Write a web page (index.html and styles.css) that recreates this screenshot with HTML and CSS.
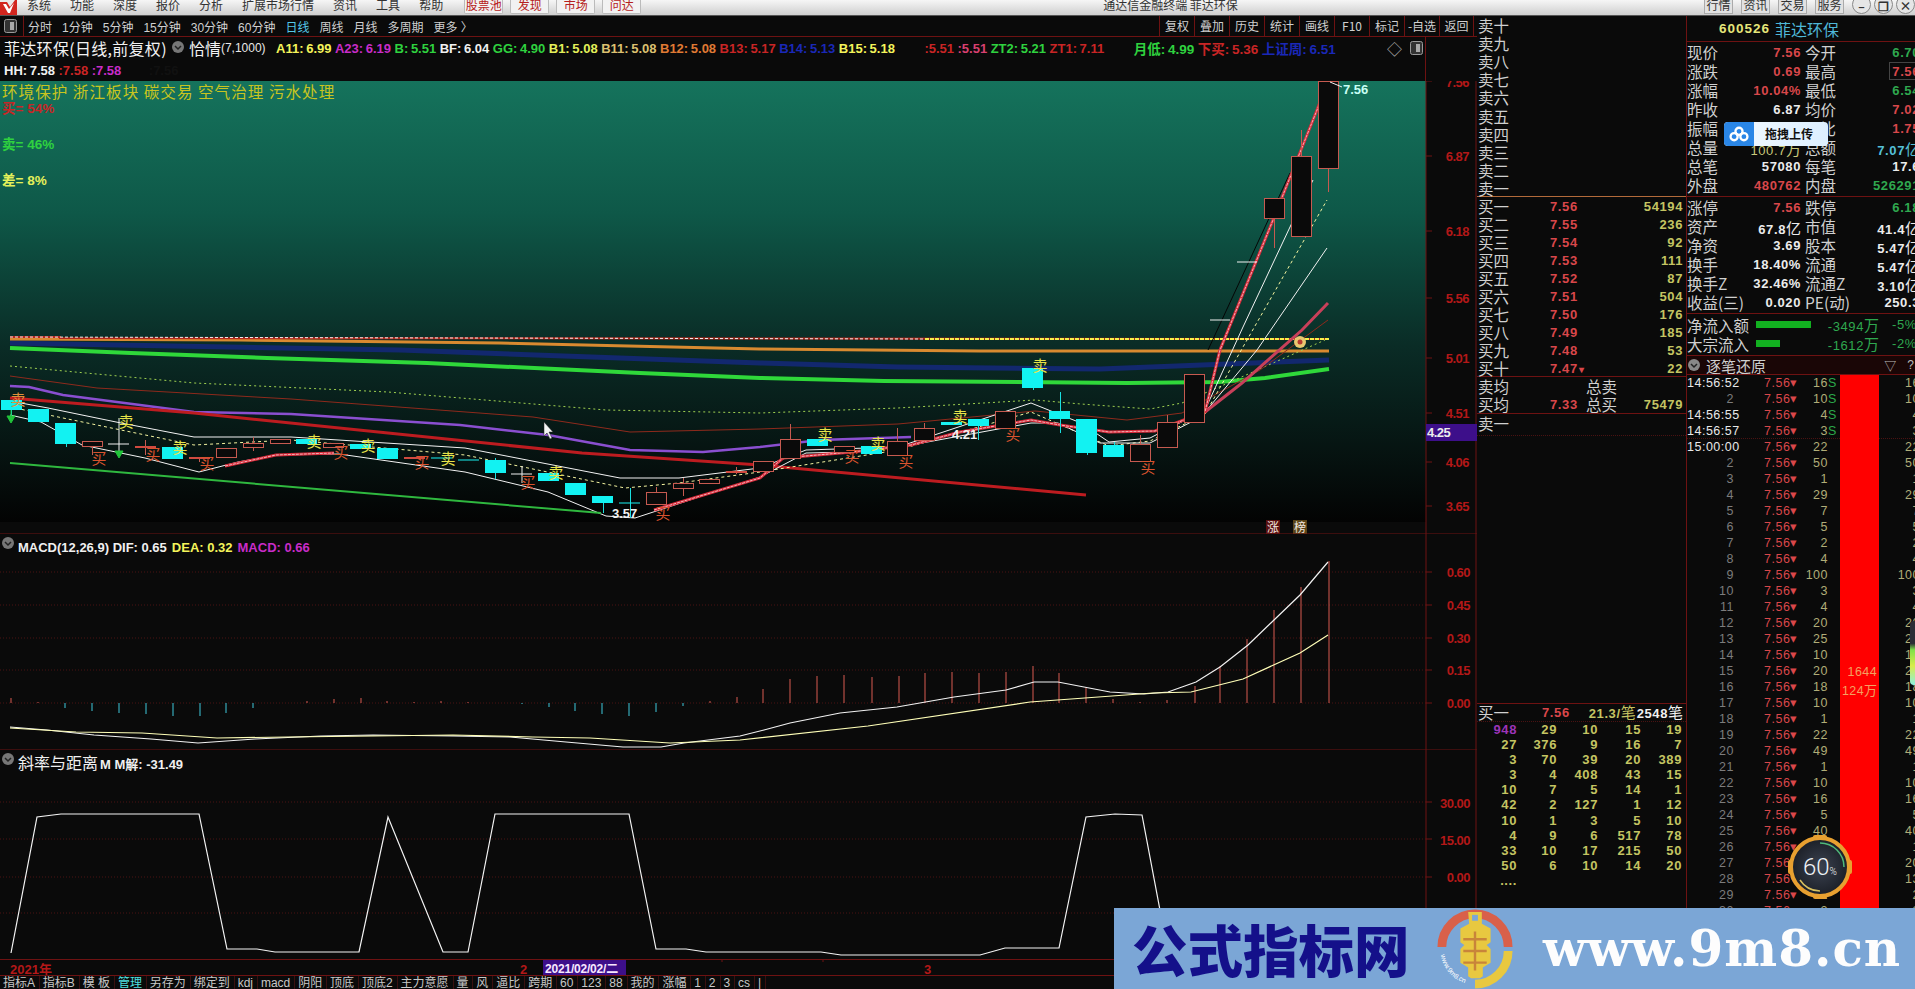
FILE: index.html
```html
<!DOCTYPE html>
<html lang="zh-CN">
<head>
    <meta charset="UTF-8">
    <title>通达信金融终端 菲达环保</title>
    <link rel="stylesheet" href="styles.css">
</head>
<body>
    <header class="titlebar">
        <svg class="logo" viewBox="0 0 17 15"><rect width="17" height="15" fill="#e8e8e8"/><path d="M0 2h7l3 5 5-7h2v15H0z" fill="#d2261f"/><path d="M3 4h3l3 5 5-6-4 10H8z" fill="#fff"/></svg>
        <nav class="menu">
            <span>系统</span><span>功能</span><span>深度</span><span>报价</span><span>分析</span><span>扩展市场行情</span><span>资讯</span><span>工具</span><span>帮助</span>
        </nav>
        <div class="quick">
            <span>股票池</span><span>发现</span><span>市场</span><span>问达</span>
        </div>
        <div class="app-title">通达信金融终端 菲达环保</div>
        <div class="win">
            <span class="win-btn">行情</span><span class="win-btn">资讯</span><span class="win-btn">交易</span><span class="win-btn">服务</span>
            <span class="win-dot">–</span><span class="win-dot">❐</span><span class="win-dot">×</span>
        </div>
    </header>

    <main class="main">
        <section class="left">
            <div class="toolbar">
                <svg class="toggle" viewBox="0 0 13 14"><rect x=".5" y=".5" width="12" height="13" rx="2" fill="#333" stroke="#999"/><rect x="6" y="3" width="4" height="8" fill="#aaa"/></svg>
                <div class="periods">
                    <span>分时</span><span>1分钟</span><span>5分钟</span><span>15分钟</span><span>30分钟</span><span>60分钟</span><span class="on">日线</span><span>周线</span><span>月线</span><span>多周期</span><span>更多 〉</span>
                </div>
                <div class="tools">
                    <span>复权</span><span>叠加</span><span>历史</span><span>统计</span><span>画线</span><span>F10</span><span>标记</span><span>-自选</span><span>返回</span>
                </div>
            </div>

            <div class="legend">
                <div class="lg-row">
                    <span class="stock">菲达环保(日线,前复权)</span>
                    <svg class="chev" viewBox="0 0 12 12"><circle cx="6" cy="6" r="6" fill="#777"/><path d="M3 5l3 3 3-3" fill="none" stroke="#222" stroke-width="1.5"/></svg>
                    <span class="stock f-name">恰情</span><span class="params">(7,1000)</span>
                    <span class="n c-yellow g-first">A11: 6.99</span>
                    <span class="n c-magenta">A23: 6.19</span>
                    <span class="n c-green">B: 5.51</span>
                    <span class="n c-white">BF: 6.04</span>
                    <span class="n c-green">GG: 4.90</span>
                    <span class="n c-lime">B1: 5.08</span>
                    <span class="n c-tan">B11: 5.08</span>
                    <span class="n c-orange">B12: 5.08</span>
                    <span class="n c-red">B13: 5.17</span>
                    <span class="n c-blue">B14: 5.13</span>
                    <span class="n c-yellow">B15: 5.18</span>
                    <span class="n c-red g-wide">:5.51</span>
                    <span class="n c-pink">:5.51</span>
                    <span class="n c-green">ZT2: 5.21</span>
                    <span class="n c-red">ZT1: 7.11</span>
                    <span class="n c-green g-wide cjk">月低: 4.99</span>
                    <span class="n c-red cjk">下买: 5.36</span>
                    <span class="n c-blue cjk">上证周: 6.51</span>
                    <span class="lg-end">
                        <span class="diamond">◇</span>
                        <svg class="toggle small" viewBox="0 0 13 14"><rect x=".5" y=".5" width="12" height="13" rx="2" fill="#333" stroke="#999"/><rect x="6" y="3" width="4" height="8" fill="#aaa"/></svg>
                    </span>
                </div>
                <div class="lg-row">
                    <span class="n c-white">HH: 7.58</span>
                    <span class="n c-red">:7.58</span>
                    <span class="n c-magenta">:7.58</span>
                    <span class="n c-hidden">:7.56</span>
                </div>
            </div>

            <svg class="pane" width="1477" height="453" viewBox="0 81 1477 453">
                <defs>
                    <linearGradient id="sky" x1="0" y1="0" x2="0" y2="1">
                        <stop offset="0" stop-color="#15735c"/>
                        <stop offset=".3" stop-color="#0e5848"/>
                        <stop offset=".6" stop-color="#0a2c26"/>
                        <stop offset="1" stop-color="#030303"/>
                    </linearGradient>
                </defs>
                <rect x="0" y="81" width="1426" height="441" fill="url(#sky)"/>

                <!-- trend lines -->
                <polyline class="l-navy" points="10,343 400,350 760,363 898,367 1100,369 1329,360"/>
                <polyline class="l-orange" points="10,339 240,340 500,343 760,349 980,351 1329,351"/>
                <polyline class="l-redtop" points="10,337 60,337 60,338 1329,339"/>
                <polyline class="l-whitedash" points="10,337 925,339"/>
                <polyline class="l-yellowdash" points="925,339 1329,339"/>
                <polyline class="l-green" points="10,348 131,353 267,358 427,363 640,373 760,378 884,381 1127,383 1219,382 1265,378 1329,369"/>
                <polyline class="l-dotgreen" points="10,366 194,383 388,392 606,410 760,413 898,408 1035,400 1081,404 1150,409 1182,403 1219,387 1325,340"/>
                <polyline class="l-brown" points="10,376 97,388 291,399 533,417 630,432 760,429 898,424 1035,411 1127,420 1182,413 1260,370 1328,320"/>
                <polyline class="l-purple" points="10,386 29,387 63,395 194,412 291,414 460,425 548,435 630,450 703,452 760,447 820,440 911,437"/>
                <polyline class="l-red" points="10,398 194,413 388,433 582,453 760,465 1086,495"/>
                <polyline class="l-white" points="10,401 48,408 121,423 194,437 291,437 465,448 620,478 679,478 760,468 806,450 898,447 1031,403 1081,423 1109,442 1150,438 1205,410 1243,327 1290,227 1313,180"/>
                <polyline class="l-dotwhite" points="10,407 121,430 194,445 291,440 465,455 625,488 679,483 760,472 898,450 1031,412 1109,446 1150,441 1205,414 1243,347 1327,200"/>
                <polyline class="l-white" points="10,415 41,422 82,445 145,458 199,472 238,462 276,455 339,454 465,472 548,492 606,516 635,518 760,477 806,453 852,452 911,445 1031,423 1058,423 1100,443 1150,443 1201,417 1257,350 1327,248"/>
                <polyline class="l-black" points="1208,350 1290,173"/>
                <polyline class="l-lowgreen" points="10,463 601,513"/>
                <polyline class="l-pink" points="1205,412 1242,383 1302,330 1328,303"/>
                <polyline class="l-fat" points="225,466 276,455 334,453"/>
                <polyline class="l-fat" points="654,510 760,478 783,458 852,452 911,445 960,432 1031,420 1060,425 1109,432 1155,431 1205,412 1220,350 1273,220 1317,110 1328,81"/>
                <polyline class="l-fatcore" points="225,466 276,455 334,453"/>
                <polyline class="l-fatcore" points="654,510 760,478 783,458 852,452 911,445 960,432 1031,420 1060,425 1109,432 1155,431 1205,412 1220,350 1273,220 1317,110 1328,81"/>

                <!-- candles -->
                <g class="wicks-up">
                    <path d="M92.5 446V455M145.5 440V455M199.5 458V462M253.5 437V451M656.5 487V492M683.5 478V496M736.5 467V474M790.5 424V439M897.5 428V441M924.5 423V428M1140.5 435V444M1167.5 415V422M1274.5 218V248M1301.5 130V156M1328.5 168V192"/>
                </g>
                <g class="wicks-dn">
                    <path d="M11.5 410V416M66.5 444V447M495.5 458V479M603.5 503V513M630.5 488V518M978.5 426V440M1033.5 388V390M1060.5 392V433M1087.5 453V455M1114.5 442V457"/>
                </g>
                <g class="flat-up">
                    <path d="M135 447H156M189 458H210M404 458H425M726 472H747"/>
                </g>
                <g class="flat-wh">
                    <path d="M108 444H129M511 474H532M1210 320H1230M1237 262H1257M522 466V483"/>
                </g>
                <g class="flat-dn">
                    <path d="M431 458H452M458 460H479M619 503H640"/>
                    <rect x="941" y="422" width="21" height="3"/>
                </g>
                <g class="k-dn">
                    <rect x="1" y="400" width="21" height="10"/><rect x="28" y="409" width="21" height="13"/><rect x="55" y="423" width="21" height="21"/>
                    <rect x="162" y="447" width="21" height="12"/><rect x="296" y="439" width="21" height="5"/><rect x="350" y="444" width="21" height="5"/>
                    <rect x="377" y="448" width="21" height="11"/><rect x="485" y="460" width="21" height="13"/><rect x="538" y="473" width="21" height="8"/>
                    <rect x="565" y="483" width="21" height="12"/><rect x="592" y="496" width="21" height="7"/><rect x="807" y="439" width="21" height="7"/>
                    <rect x="861" y="446" width="21" height="8"/><rect x="968" y="419" width="21" height="7"/><rect x="1022" y="368" width="21" height="20"/>
                    <rect x="1049" y="411" width="21" height="8"/><rect x="1076" y="419" width="21" height="34"/><rect x="1103" y="445" width="21" height="12"/>
                </g>
                <g class="k-up">
                    <rect x="82.5" y="441.5" width="20" height="5"/><rect x="216.5" y="448.5" width="20" height="9"/><rect x="243.5" y="443.5" width="20" height="4"/>
                    <rect x="270.5" y="439.5" width="20" height="4"/><rect x="323.5" y="443.5" width="20" height="4"/><rect x="646.5" y="492.5" width="20" height="12"/>
                    <rect x="673.5" y="483.5" width="20" height="5"/><rect x="699.5" y="479.5" width="20" height="4"/><rect x="753.5" y="461.5" width="20" height="10"/>
                    <rect x="780.5" y="439.5" width="20" height="19"/><rect x="834.5" y="446.5" width="20" height="6"/><rect x="887.5" y="441.5" width="20" height="14"/>
                    <rect x="914.5" y="428.5" width="20" height="12"/><rect x="995.5" y="411.5" width="20" height="17"/><rect x="1130.5" y="444.5" width="20" height="17"/>
                    <rect x="1157.5" y="422.5" width="20" height="25"/><rect x="1184.5" y="374.5" width="20" height="48"/><rect x="1264.5" y="198.5" width="20" height="20"/>
                    <rect x="1291.5" y="156.5" width="20" height="80"/><rect x="1318.5" y="81.5" width="20" height="87"/>
                </g>

                <!-- arrows, signals, marks -->
                <path class="a-green" d="M11 410V420M7 416l4 7 4-7z"/>
                <path class="a-white" d="M119 418V452"/>
                <path class="a-green" d="M115 451l4 7 4-7z"/>
                <g class="buy">
                    <text x="99" y="464">买</text><text x="153" y="460">买</text><text x="207" y="469">买</text><text x="341" y="458">买</text>
                    <text x="422" y="468">买</text><text x="528" y="488">买</text><text x="663" y="519">买</text><text x="852" y="462">买</text>
                    <text x="906" y="467">买</text><text x="1013" y="440">买</text><text x="1148" y="473">买</text>
                </g>
                <g class="sell">
                    <text class="orange" x="18" y="405">卖</text><text x="126" y="427">卖</text><text x="180" y="453">卖</text><text x="314" y="447">卖</text>
                    <text x="368" y="451">卖</text><text x="448" y="464">卖</text><text x="556" y="478">卖</text><text x="825" y="440">卖</text>
                    <text x="878" y="449">卖</text><text x="960" y="422">卖</text><text x="1040" y="371">卖</text>
                </g>
                <text class="mark" x="612" y="518">3.57</text>
                <text class="mark" x="952" y="439">4.21</text>
                <text class="mark cyan" x="1343" y="94">7.56</text>
                <path class="a-white" d="M1330 82l12 5"/>
                <path class="cursor" d="M544 422v14l3-3 3 6 2-1-3-6h4z"/>
                <circle cx="1300" cy="342" r="6" fill="#e8c870"/><circle cx="1300" cy="342" r="2.5" fill="#b83a30"/>
                <rect x="1266" y="520" width="14" height="14" fill="#5a1010"/><text class="tag" x="1273" y="532">涨</text>
                <rect x="1293" y="520" width="14" height="14" fill="#5a4418"/><text class="tag" x="1300" y="532">榜</text>
                <path class="ticks-top" d="M11 79v2M91 79v2M603 79v2M1005 79v2M1220 79v2M1247 79v2M1301 79v2M1328 78v3"/>
                <text class="chart-tag" x="2" y="98">环境保护 浙江板块 碳交易 空气治理 污水处理</text>
                <text class="ratio c-red" x="2" y="113">买= 54%</text>
                <text class="ratio c-green" x="2" y="149">卖= 46%</text>
                <text class="ratio c-lime" x="2" y="185">差= 8%</text>

                <!-- price axis -->
                <path class="axis-line" d="M1426 81V534M1476 81V534M0 534H1477"/>
                <path class="axis-line" d="M1426 81h6M1426 156h6M1426 231h6M1426 298h6M1426 358h6M1426 413h6M1426 462h6M1426 506h6"/>
                <g class="axis-text">
                    <text x="1469" y="87">7.56</text><text x="1469" y="161">6.87</text><text x="1469" y="236">6.18</text><text x="1469" y="303">5.56</text>
                    <text x="1469" y="363">5.01</text><text x="1469" y="418">4.51</text><text x="1469" y="467">4.06</text><text x="1469" y="511">3.65</text>
                </g>
                <rect x="1426" y="424" width="51" height="17" fill="#3d0f8a"/>
                <text class="axis-now" x="1427" y="437">4.25</text>
            </svg>

            <svg class="pane" width="1477" height="216" viewBox="0 534 1477 216">
                <path class="grid" d="M0 572H1426M0 605H1426M0 638H1426M0 670H1426M0 703H1426"/>
                <path class="bar-up" d="M11 698V703M38 702V703M307 701V703M334 699V703M361 698V703M387 701V703M414 702V703M441 701V703M468 702V703M710 701V703M737 697V703M763 689V703M790 679V703M817 676V703M844 675V703M872 677V703M899 676V703M925 673V703M952 672V703M979 673V703M1006 672V703M1033 666V703M1059 673V703M1086 687V703M1113 699V703M1140 702V703M1167 700V703M1195 686V703M1220 666V703M1247 639V703M1274 610V703M1301 587V703M1329 561V703"/>
                <path class="bar-dn" d="M65 703V708M92 703V711M119 703V713M146 703V714M173 703V716M200 703V716M226 703V713M253 703V708M522 703V704M549 703V707M575 703V711M602 703V714M629 703V716M656 703V712M683 703V706"/>
                <polyline class="dif" points="10,727 47,730 94,735 151,739 198,743 255,739 321,736 373,735 453,736 510,737 566,742 623,747 661,747 684,743 740,736 764,730 790,723 840,713 897,707 954,697 1006,690 1034,682 1058,682 1110,692 1144,694 1168,692 1196,682 1220,667 1248,645 1274,620 1300,595 1328,562"/>
                <polyline class="dea" points="10,728 76,732 142,733 217,738 288,737 373,736 453,735 533,737 590,738 670,743 740,740 868,726 1030,702 1153,693 1191,692 1243,679 1300,653 1328,635"/>
                <circle cx="8" cy="543" r="6" fill="#777"/><path d="M5 542l3 3 3-3" fill="none" stroke="#222" stroke-width="1.5"/>
                <text class="n-text" x="18" y="552"><tspan class="fill-white">MACD(12,26,9) DIF: 0.65</tspan><tspan class="fill-yellow" dx="5">DEA: 0.32</tspan><tspan class="fill-magenta" dx="5">MACD: 0.66</tspan></text>
                <path class="axis-line" d="M1426 534V750M1476 534V750M0 750H1477M1426 572h6M1426 605h6M1426 638h6M1426 670h6M1426 703h6"/>
                <g class="axis-text">
                    <text x="1470" y="577">0.60</text><text x="1470" y="610">0.45</text><text x="1470" y="643">0.30</text><text x="1470" y="675">0.15</text><text x="1470" y="708">0.00</text>
                </g>
            </svg>

            <svg class="pane" width="1477" height="209" viewBox="0 750 1477 209">
                <path class="grid" d="M0 802H1426M0 839H1426M0 877H1426M0 913H1426"/>
                <polyline class="slope" points="11,953 37,817 61,814 199,814 227,949 257,949 275,952 359,952 388,817 443,952 468,952 495,814 629,814 656,949 686,949 706,952 821,952 841,955 980,955 1005,948 1059,948 1086,817 1115,814 1142,815 1160,910 1168,940"/>
                <circle cx="8" cy="759" r="6" fill="#777"/><path d="M5 758l3 3 3-3" fill="none" stroke="#222" stroke-width="1.5"/>
                <text class="n-text fill-white" x="18" y="769"><tspan class="big-cjk">斜率与距离</tspan><tspan dx="2">M M解: -31.49</tspan></text>
                <path class="axis-line" d="M1426 750V959M1476 750V959M1426 802h6M1426 839h6M1426 877h6"/>
                <g class="axis-text">
                    <text x="1470" y="808">30.00</text><text x="1470" y="845">15.00</text><text x="1470" y="882">0.00</text>
                </g>
            </svg>

            <svg class="pane" width="1477" height="16" viewBox="0 959 1477 16">
                <path class="axis-line" d="M0 959.5H1477M1426 959V975M1476 959V975M722 959v3M823 959v3"/>
                <text class="date-red" x="10" y="974">2021年</text>
                <text class="date-red" x="520" y="974">2</text>
                <rect x="543" y="960" width="83" height="15" fill="#3d0f8a"/>
                <text class="date-now" x="545" y="973">2021/02/02/二</text>
                <text class="date-red" x="924" y="974">3</text>
            </svg>

            <div class="tabs">
                <span>指标A</span><span>指标B</span><span>模 板</span><span class="on">管理</span><span>另存为</span><span>绑定到</span><span>kdj</span><span>macd</span><span>阴阳</span><span>顶底</span><span>顶底2</span><span>主力意愿</span><span>量</span><span>风</span><span>逼比</span><span>跨期</span><span>60</span><span>123</span><span>88</span><span>我的</span><span>涨幅</span><span>1</span><span>2</span><span>3</span><span>cs</span><span>|</span>
            </div>
        </section>

        <section class="book">
            <div class="asks">
                <div class="ob">卖十</div><div class="ob">卖九</div><div class="ob">卖八</div><div class="ob">卖七</div><div class="ob">卖六</div>
                <div class="ob">卖五</div><div class="ob">卖四</div><div class="ob">卖三</div><div class="ob">卖二</div><div class="ob">卖一</div>
            </div>
            <div class="bids">
                <div class="ob">买一<b>7.56</b><i>54194</i></div>
                <div class="ob">买二<b>7.55</b><i>236</i></div>
                <div class="ob">买三<b>7.54</b><i>92</i></div>
                <div class="ob">买四<b>7.53</b><i>111</i></div>
                <div class="ob">买五<b>7.52</b><i>87</i></div>
                <div class="ob">买六<b>7.51</b><i>504</i></div>
                <div class="ob">买七<b>7.50</b><i>176</i></div>
                <div class="ob">买八<b>7.49</b><i>185</i></div>
                <div class="ob">买九<b>7.48</b><i>53</i></div>
                <div class="ob">买十<b>7.47<em>▾</em></b><i>22</i></div>
            </div>
            <div class="avg">
                <div class="ob">卖均<b></b><u>总卖</u></div>
                <div class="ob">买均<b>7.33</b><u>总买</u><i>75479</i></div>
            </div>
            <div class="queue-top">
                <div class="ob">卖一</div>
            </div>
            <div class="queue-gap"></div>
            <div class="queue">
                <div class="queue-head">
                    <span class="lbl">买一</span><b>7.56</b><i>21.3/<u>笔</u></i><em>2548<u>笔</u></em>
                </div>
                <div class="queue-grid">
                    <span class="p">948</span><span>29</span><span>10</span><span>15</span><span>19</span>
                    <span>27</span><span>376</span><span>9</span><span>16</span><span>7</span>
                    <span>3</span><span>70</span><span>39</span><span>20</span><span>389</span>
                    <span>3</span><span>4</span><span>408</span><span>43</span><span>15</span>
                    <span>10</span><span>7</span><span>5</span><span>14</span><span>1</span>
                    <span>42</span><span>2</span><span>127</span><span>1</span><span>12</span>
                    <span>10</span><span>1</span><span>3</span><span>5</span><span>10</span>
                    <span>4</span><span>9</span><span>6</span><span>517</span><span>78</span>
                    <span>33</span><span>10</span><span>17</span><span>215</span><span>50</span>
                    <span>50</span><span>6</span><span>10</span><span>14</span><span>20</span>
                    <span>....</span>
                </div>
            </div>
        </section>

        <section class="side">
            <div class="code-row"><b>600526</b><span>菲达环保</span></div>
            <div class="stats first">
                <span>现价</span><b class="up">7.56</b><span>今开</span><b class="down">6.70</b>
                <span>涨跌</span><b class="up">0.69</b><span>最高</span><b class="up boxed">7.56</b>
                <span>涨幅</span><b class="up">10.04%</b><span>最低</span><b class="down">6.54</b>
                <span>昨收</span><b>6.87</b><span>均价</span><b class="up">7.02</b>
                <span>振幅</span><b>15.64%</b><span>量比</span><b class="up">1.75</b>
                <span>总量</span><b class="pale">100.7<u>万</u></b><span>总额</span><b class="sky">7.07<u>亿</u></b>
                <span>总笔</span><b>57080</b><span>每笔</span><b>17.6</b>
                <span>外盘</span><b class="up">480762</b><span>内盘</span><b class="down">526291</b>
            </div>
            <div class="stats">
                <span>涨停</span><b class="up">7.56</b><span>跌停</span><b class="down">6.18</b>
                <span>资产</span><b>67.8<u>亿</u></b><span>市值</span><b>41.4<u>亿</u></b>
                <span>净资</span><b>3.69</b><span>股本</span><b>5.47<u>亿</u></b>
                <span>换手</span><b>18.40%</b><span>流通</span><b>5.47<u>亿</u></b>
                <span>换手Z</span><b>32.46%</b><span>流通Z</span><b>3.10<u>亿</u></b>
                <span>收益(三)</span><b>0.020</b><span>PE(动)</span><b>250.3</b>
            </div>
            <div class="flows">
                <div class="flow"><span>净流入额</span><div class="flow-bar"><i style="width:55px"></i></div><b>-3494<u>万</u></b><b class="pct">-5%</b></div>
                <div class="flow"><span>大宗流入</span><div class="flow-bar"><i style="width:24px"></i></div><b>-1612<u>万</u></b><b class="pct">-2%</b></div>
            </div>
            <div class="ticks-head">
                <svg class="chev" viewBox="0 0 12 12"><circle cx="6" cy="6" r="6" fill="#888"/><path d="M3 5l3 3 3-3" fill="none" stroke="#222" stroke-width="1.5"/></svg>
                <span>逐笔还原</span><em>▽</em><em>?</em>
            </div>
            <div class="ticks">
                <div class="tk-list">
                    <div class="tk"><span class="w">14:56:52</span><b>7.56▾</b><i>16</i><u>S</u></div>
                    <div class="tk"><span>2</span><b>7.56▾</b><i>10</i><u>S</u></div>
                    <div class="tk"><span class="w">14:56:55</span><b>7.56▾</b><i>4</i><u>S</u></div>
                    <div class="tk tk-last"><span class="w">14:56:57</span><b>7.56▾</b><i>3</i><u>S</u></div>
                    <div class="tk"><span class="w">15:00:00</span><b>7.56▾</b><i>22</i></div>
                    <div class="tk"><span>2</span><b>7.56▾</b><i>50</i></div>
                    <div class="tk"><span>3</span><b>7.56▾</b><i>1</i></div>
                    <div class="tk"><span>4</span><b>7.56▾</b><i>29</i></div>
                    <div class="tk"><span>5</span><b>7.56▾</b><i>7</i></div>
                    <div class="tk"><span>6</span><b>7.56▾</b><i>5</i></div>
                    <div class="tk"><span>7</span><b>7.56▾</b><i>2</i></div>
                    <div class="tk"><span>8</span><b>7.56▾</b><i>4</i></div>
                    <div class="tk"><span>9</span><b>7.56▾</b><i>100</i></div>
                    <div class="tk"><span>10</span><b>7.56▾</b><i>3</i></div>
                    <div class="tk"><span>11</span><b>7.56▾</b><i>4</i></div>
                    <div class="tk"><span>12</span><b>7.56▾</b><i>20</i></div>
                    <div class="tk"><span>13</span><b>7.56▾</b><i>25</i></div>
                    <div class="tk"><span>14</span><b>7.56▾</b><i>10</i></div>
                    <div class="tk"><span>15</span><b>7.56▾</b><i>20</i></div>
                    <div class="tk"><span>16</span><b>7.56▾</b><i>18</i></div>
                    <div class="tk"><span>17</span><b>7.56▾</b><i>10</i></div>
                    <div class="tk"><span>18</span><b>7.56▾</b><i>1</i></div>
                    <div class="tk"><span>19</span><b>7.56▾</b><i>22</i></div>
                    <div class="tk"><span>20</span><b>7.56▾</b><i>49</i></div>
                    <div class="tk"><span>21</span><b>7.56▾</b><i>1</i></div>
                    <div class="tk"><span>22</span><b>7.56▾</b><i>10</i></div>
                    <div class="tk"><span>23</span><b>7.56▾</b><i>16</i></div>
                    <div class="tk"><span>24</span><b>7.56▾</b><i>5</i></div>
                    <div class="tk"><span>25</span><b>7.56▾</b><i>40</i></div>
                    <div class="tk"><span>26</span><b>7.56▾</b><i>1</i></div>
                    <div class="tk"><span>27</span><b>7.56▾</b><i>20</i></div>
                    <div class="tk"><span>28</span><b>7.56▾</b><i>13</i></div>
                    <div class="tk"><span>29</span><b>7.56▾</b><i>2</i></div>
                    <div class="tk"><span>30</span><b>7.56▾</b><i>2</i></div>
                </div>
                <div class="tk-bar"><span>1644</span><span>124<u>万</u></span></div>
                <div class="tk-vols">
                    <span>16</span><span>10</span><span>4</span><span class="tk-last">3</span><span>22</span><span>50</span><span>1</span><span>29</span><span>7</span><span>5</span><span>2</span><span>4</span><span>100</span><span>3</span><span>4</span><span>20</span><span>25</span><span>10</span><span>20</span><span>18</span><span>10</span><span>1</span><span>22</span><span>49</span><span>1</span><span>10</span><span>16</span><span>5</span><span>40</span><span>1</span><span>20</span><span>13</span><span>2</span><span>2</span>
                </div>
            </div>
        </section>
    </main>

    <!-- things floating over the terminal -->
    <div class="upload">
        <div class="upload-icon">
            <svg viewBox="0 0 24 18" width="22" height="16"><g fill="none" stroke="#fff" stroke-width="2.6"><circle cx="12" cy="6" r="4"/><circle cx="6.5" cy="12" r="4"/><circle cx="17.5" cy="12" r="4"/></g></svg>
        </div>
        <span>拖拽上传</span>
    </div>

    <div class="badge">
        <svg viewBox="0 0 64 64" width="64" height="64">
            <defs><radialGradient id="dial"><stop offset="0" stop-color="#3b4250"/><stop offset="1" stop-color="#1b1f27"/></radialGradient></defs>
            <circle cx="32" cy="32" r="29" fill="url(#dial)" stroke="#e8a030" stroke-width="4"/>
            <rect x="25" y="0" width="14" height="4" rx="2" fill="#e8a030"/><rect x="25" y="60" width="14" height="4" rx="2" fill="#e8a030"/>
            <rect x="0" y="25" width="4" height="14" rx="2" fill="#e8a030"/><rect x="60" y="25" width="4" height="14" rx="2" fill="#e8a030"/>
            <path d="M32 8a24 24 0 0 1 24 24" fill="none" stroke="#4fb97a" stroke-width="1.5"/>
            <path d="M32 56a24 24 0 0 1-20-11" fill="none" stroke="#d8c060" stroke-width="1.5"/>
        </svg>
        <span class="badge-num">60<small>%</small></span>
    </div>

    <div class="edge-gauge"></div>

    <aside class="banner">
        <div class="banner-name">公式指标网</div>
        <svg class="banner-logo" viewBox="0 0 80 80" width="78" height="80">
            <defs><path id="ring" d="M5 46A36 36 0 0 0 34 76"/></defs>
            <path d="M6 38A34 34 0 0 1 74 38" fill="none" stroke="#d9604a" stroke-width="9"/>
            <path d="M74 42A34 34 0 0 1 40 76" fill="none" stroke="#e8c840" stroke-width="9"/>
            <path d="M33 2h14v12l9 5v14l-4 3 4 4v14l-8 5v9l-3 2h-9l-3-2v-9l-8-5V40l4-4-4-3V19l9-5z" fill="#e8c840"/>
            <path d="M28 30h24M28 42h24M28 54h24M40 22v40" stroke="#c8843a" stroke-width="2.5"/>
            <rect x="37" y="5" width="6" height="6" fill="#7ba6d6"/>
            <text class="logo-url"><textPath href="#ring">www.9m8.cn</textPath></text>
        </svg>
        <div class="banner-url">www.9m8.cn</div>
    </aside>
</body>
</html>
```

FILE: styles.css
```css
:root {
    --bg: #0a0a0a;
    --line: #6e1212;
    --up: #d9474a;
    --down: #2fa84f;
    --vol: #c4c462;
    --label: #d0d0d0;
    --cjk: "Noto Sans CJK SC", sans-serif;
    --num: "Liberation Sans", "Noto Sans CJK SC", sans-serif;
}

* {
    box-sizing: border-box;
}

html, body {
    margin: 0;
    height: 100%;
}

body {
    position: relative;
    width: 1915px;
    height: 989px;
    overflow: hidden;
    background: var(--bg);
    color: var(--label);
    font-family: var(--cjk);
    font-size: 12px;
}

/* title bar, cut off at the top of the shot */
.titlebar {
    display: flex;
    height: 16px;
    background: linear-gradient(#f6f6f6, #cfcfcf);
    border-bottom: 1px solid #555;
    line-height: 10px;
    color: #333;
    overflow: hidden;
}

.logo {
    width: 17px;
    height: 15px;
    flex: none;
}

.menu {
    display: flex;
    gap: 19px;
    margin-left: 10px;
}

.quick {
    display: flex;
    gap: 7px;
    margin-left: 21px;
}

.quick span {
    width: 39px;
    height: 14px;
    text-align: center;
    color: #b62020;
    background: #f2f2f2;
    border: 1px solid #bbb;
    border-top: none;
    border-radius: 0 0 2px 2px;
}

.app-title {
    margin-left: 462px;
    width: 140px;
    white-space: nowrap;
}

.win {
    display: flex;
    gap: 8px;
    margin-left: auto;
}

.win-btn {
    width: 29px;
    height: 14px;
    text-align: center;
    background: #e2e2e2;
    border: 1px solid #aaa;
    border-top: none;
}

.win-dot {
    width: 19px;
    height: 19px;
    margin: -5px -5px 0 0;
    border: 1px solid #888;
    border-radius: 50%;
    background: #e6e6e6;
    text-align: center;
    line-height: 19px;
    font-weight: bold;
}

.win-dot:last-child {
    margin-right: 0;
}

.main {
    display: flex;
    height: 973px;
}

/* chart column */
.left {
    width: 1477px;
    flex: none;
    display: flex;
    flex-direction: column;
}

.toolbar {
    display: flex;
    align-items: center;
    height: 21px;
    border-bottom: 1px solid var(--line);
}

.toggle {
    width: 13px;
    height: 14px;
    margin-left: 4px;
}

.toggle.small {
    margin-left: 8px;
}

.periods {
    display: flex;
    gap: 10px;
    margin-left: 6px;
    padding-left: 4px;
    border-left: 1px solid var(--line);
    height: 100%;
    align-items: center;
    font-family: var(--num), var(--cjk);
}

.periods .on {
    color: #55c8e8;
}

.tools {
    display: flex;
    margin-left: auto;
    margin-right: 3px;
    height: 100%;
}

.tools span {
    width: 35px;
    text-align: center;
    line-height: 20px;
    border-left: 1px solid var(--line);
    white-space: nowrap;
}

.tools span:last-child {
    border-right: 1px solid var(--line);
}

.legend {
    width: 1426px;
    height: 44px;
    border-right: 1px solid var(--line);
}

.lg-row {
    display: flex;
    align-items: center;
    gap: 3.5px;
    height: 22px;
    padding-left: 4px;
}

.stock {
    font-size: 16px;
    color: #f2f2f2;
    letter-spacing: .3px;
    white-space: nowrap;
}

.f-name {
    margin-left: 1.5px;
    letter-spacing: 0;
}

.params {
    margin-left: -3.5px;
    font: 12px var(--num);
    color: #e8e8e8;
}

.chev {
    width: 12px;
    height: 12px;
    flex: none;
    margin: 0 0 3px 1.5px;
}

.n {
    font: bold 13px var(--num);
    word-spacing: -1px;
    white-space: nowrap;
}

.n.cjk {
    font-size: 13.5px;
}

.g-first {
    margin-left: 7px;
}

.g-wide {
    margin-left: 26px;
}

.lg-end {
    display: flex;
    align-items: center;
    margin-left: auto;
    margin-right: 2px;
    color: #aaa;
    font-size: 15px;
}

.c-white { color: #f0f0f0; }
.c-yellow { color: #f4f45a; }
.c-magenta { color: #c82cc8; }
.c-green { color: #2fd23f; }
.c-lime { color: #e4f05a; }
.c-tan { color: #dcc070; }
.c-orange { color: #e07a34; }
.c-red { color: #c92525; }
.c-pink { color: #d84070; }
.c-blue { color: #1a28b8; }
.c-hidden { color: #111; margin-left: 24px; }

.pane {
    display: block;
    flex: none;
}

/* lines inside the charts */
polyline {
    fill: none;
}

.l-navy { stroke: #12286e; stroke-width: 5; }
.l-orange { stroke: #d98a30; stroke-width: 3; }
.l-redtop { stroke: #b5281c; stroke-width: 2; }
.l-whitedash { stroke: #f0f0f0; stroke-width: 1; stroke-dasharray: 3 2; }
.l-yellowdash { stroke: #f6f04a; stroke-width: 2; stroke-dasharray: 4 1; }
.l-green { stroke: #2fd83a; stroke-width: 4; }
.l-dotgreen { stroke: #9ed050; stroke-width: 1; stroke-dasharray: 2 3; }
.l-brown { stroke: #8e2a1c; stroke-width: 1; }
.l-purple { stroke: #8a4fd0; stroke-width: 2.5; }
.l-red { stroke: #bd1c20; stroke-width: 3; }
.l-white { stroke: #f2f2f2; stroke-width: 1; }
.l-dotwhite { stroke: #f4f4a0; stroke-width: 1; stroke-dasharray: 3 3; }
.l-black { stroke: #050505; stroke-width: 1; }
.l-lowgreen { stroke: #2fb83f; stroke-width: 2; }
.l-pink { stroke: #c8405a; stroke-width: 3; }
.l-fat { stroke: #d82a3a; stroke-width: 3; }
.l-fatcore { stroke: #f8d8d8; stroke-width: .8; stroke-dasharray: 3 1; }

.wicks-up path { stroke: #c65a50; fill: none; }
.wicks-dn path { stroke: #19e0e0; fill: none; }
.flat-up path { stroke: #d04a40; stroke-width: 2; fill: none; }
.flat-wh path { stroke: #f0f0f0; fill: none; }
.flat-dn path { stroke: #19f2f2; stroke-width: 1; fill: none; }
.flat-dn rect { fill: #19f2f2; }
.k-dn rect { fill: #12f2f2; }
.k-up rect { fill: #0a0a0a; stroke: #c65a50; }

.a-green { stroke: #21c43a; fill: #21c43a; }
.a-white { stroke: #f0f0f0; fill: none; }
.cursor { fill: #f4f4f4; stroke: #222; stroke-width: .5; }
.ticks-top { stroke: #8a3fb8; stroke-width: 2; }

.buy text, .sell text, .tag {
    font-family: var(--cjk);
    text-anchor: middle;
}

.buy text { fill: #d8532e; font-size: 15px; }
.sell text { fill: #e8e44a; font-size: 15px; }
.sell .orange { fill: #e0903a; }
.tag { fill: #f2e8e0; font-size: 12px; }

.mark {
    fill: #f2f2f2;
    font: bold 13px var(--num);
}

.mark.cyan {
    fill: #c8fff4;
}

.chart-tag {
    fill: #c8c420;
    font: 15.6px var(--cjk);
    letter-spacing: 1px;
}

.ratio {
    font: bold 13.5px var(--num);
}

.ratio.c-red { fill: #c92525; }
.ratio.c-green { fill: #2fd23f; }
.ratio.c-lime { fill: #e4f05a; }

.axis-line { stroke: var(--line); fill: none; }

.axis-text text {
    fill: #b31818;
    font: bold 13px var(--num);
    letter-spacing: -.5px;
    text-anchor: end;
}

.axis-now {
    fill: #ececec;
    font: bold 13px var(--num);
    letter-spacing: -.5px;
}

.grid {
    stroke: #4a1212;
    stroke-dasharray: 1 2;
    fill: none;
}

.bar-up { stroke: #d85a50; fill: none; }
.bar-dn { stroke: #3fc8dc; fill: none; }
.dif { stroke: #f2f2f2; stroke-width: 1.2; }
.dea { stroke: #ffffb8; stroke-width: 1.2; }
.slope { stroke: #f4f4f4; stroke-width: 1.2; }

.n-text {
    font: bold 13px var(--num);
    white-space: pre;
}

.big-cjk {
    font: 16px var(--cjk);
}

.fill-white { fill: #f0f0f0; }
.fill-yellow { fill: #f4f45a; }
.fill-magenta { fill: #c82cc8; }

.date-red {
    fill: #b31818;
    font: bold 13px var(--num);
}

.date-now {
    fill: #f8e8ff;
    font: bold 12px var(--num);
    letter-spacing: -.2px;
}

.tabs {
    display: flex;
    height: 14px;
    line-height: 14px;
    font-size: 12px;
    font-family: var(--num), var(--cjk);
    color: #c8c8c8;
    border-top: 1px solid var(--line);
    white-space: nowrap;
}

.tabs span {
    padding: 0 4px 0 2.9px;
    border-right: 1px solid #3a1010;
}

.tabs .on {
    color: #4fe0e0;
}

/* order book */
.book {
    width: 210px;
    flex: none;
    border-right: 1px solid var(--line);
    font-family: var(--cjk);
}

.ob {
    display: flex;
    align-items: center;
    height: 18px;
    padding: 0 3px 0 1px;
    font-size: 15.5px;
    line-height: 18px;
    color: var(--label);
}

.ob b {
    width: 30px;
    margin-left: 41px;
    font: bold 13px var(--num);
    letter-spacing: .6px;
    color: var(--up);
    white-space: nowrap;
}

.ob em {
    font-style: normal;
    font-size: 10px;
    margin-left: 1px;
}

.ob i {
    margin-left: auto;
    font: bold 13px var(--num);
    letter-spacing: .6px;
    color: var(--vol);
}

.ob u {
    margin-left: 6px;
    text-decoration: none;
}

.asks {
    height: 181px;
    border-bottom: 1px solid #b36a3a;
}

.asks .ob {
    height: 18.1px;
}

.bids {
    height: 180px;
    border-bottom: 1px solid var(--line);
}

.avg {
    height: 37px;
    border-bottom: 1px solid var(--line);
}

.queue-top {
    height: 22px;
    border-bottom: 1px dotted #4a1212;
}

.queue-gap {
    height: 268px;
    border-bottom: 1px solid var(--line);
}

.queue-head {
    display: flex;
    align-items: center;
    height: 18px;
    padding: 0 3px 0 1px;
    border-bottom: 1px dotted #4a1212;
    font: bold 13px/17px var(--num);
    letter-spacing: .6px;
    white-space: nowrap;
}

.queue-head .lbl {
    font: 15.5px/17px var(--cjk);
    letter-spacing: 0;
}

.queue-head b {
    margin-left: 33px;
    color: var(--up);
}

.queue-head i {
    margin-left: 19px;
    font-style: normal;
    color: var(--vol);
}

.queue-head em {
    margin-left: auto;
    font-style: normal;
    color: #f0f0f0;
}

.queue-head u {
    font: 15px/17px var(--cjk);
    letter-spacing: 0;
    text-decoration: none;
}

.queue-grid {
    display: grid;
    grid-template-columns: 40px 40px 41px 43px 41px;
    grid-auto-rows: 15.1px;
    padding-right: 4px;
    text-align: right;
    font: bold 13px/15px var(--num);
    letter-spacing: .6px;
    color: var(--vol);
}

.queue-grid .p {
    color: #9c34b8;
}

/* quote column */
.side {
    width: 233px;
    flex: none;
    font-family: var(--cjk);
}

.code-row {
    display: flex;
    align-items: center;
    gap: 5px;
    height: 26px;
    padding-left: 32px;
    border-bottom: 1px solid var(--line);
}

.code-row b {
    font: bold 13.5px var(--num);
    letter-spacing: 1px;
    color: #e6e67a;
}

.code-row span {
    font-size: 16px;
    color: #4fb8d8;
}

.stats {
    display: grid;
    grid-template-columns: 51px 63px 60px 59px;
    grid-auto-rows: 19px;
    height: 117px;
    padding-top: 1px;
    border-bottom: 1px solid var(--line);
    line-height: 19px;
}

.stats.first {
    height: 155px;
}

.stats span {
    font-size: 15.5px;
    white-space: nowrap;
    color: var(--label);
}

.stats span:nth-child(4n+3) {
    padding-left: 4px;
}

.stats b {
    font: bold 13px/19px var(--num);
    letter-spacing: .6px;
    text-align: right;
    white-space: nowrap;
    color: #ececec;
}

.stats u,
.flow u,
.tk-bar u {
    font: 15px var(--cjk);
    letter-spacing: 0;
    text-decoration: none;
}

.stats .up { color: var(--up); }
.stats .down { color: var(--down); }
.stats .pale { color: #c8c87a; font-weight: normal; }
.stats .sky { color: #55c0d8; }

.stats .boxed {
    justify-self: end;
    width: 31px;
    height: 18px;
    outline: 1px solid #444;
    outline-offset: -1px;
}

.flows {
    height: 42px;
    padding-top: 1px;
    border-bottom: 1px solid var(--line);
}

.flow {
    display: flex;
    align-items: center;
    height: 19px;
    white-space: nowrap;
}

.flow > span {
    width: 69px;
    font-size: 15.5px;
    color: var(--label);
}

.flow-bar {
    width: 63px;
}

.flow-bar i {
    display: block;
    height: 7px;
    background: #12b020;
}

.flow b {
    width: 60px;
    text-align: right;
    font: 13px var(--num);
    letter-spacing: .6px;
    color: var(--down);
}

.flow u {
    color: var(--down);
}

.flow .pct {
    width: 38px;
}

.ticks-head {
    display: flex;
    align-items: center;
    gap: 6px;
    height: 19px;
    padding-left: 1px;
    background: #1a0606;
    border-bottom: 1px solid var(--line);
    font-size: 15px;
}

.ticks-head .chev {
    margin: 0;
}

.ticks-head em {
    font: 12px var(--num);
    color: #bbb;
}

.ticks-head em:nth-of-type(1) {
    margin-left: auto;
    margin-right: 5px;
}

.ticks-head em:nth-of-type(2) {
    margin-right: 6px;
}

.ticks {
    display: flex;
    height: 540px;
}

.tk-list {
    width: 153px;
    flex: none;
}

.tk {
    display: grid;
    grid-template-columns: 47px 60px 34px 12px;
    height: 16px;
    font: 12.5px/16px var(--num);
    letter-spacing: .5px;
}

.tk-last {
    border-bottom: 1px dotted #4a1212;
}

.tk span {
    text-align: right;
    color: #7c7c7c;
}

.tk .w {
    color: #e8e8e8;
    white-space: nowrap;
}

.tk b {
    padding-left: 30px;
    font-weight: normal;
    color: var(--up);
    white-space: nowrap;
}

.tk i {
    text-align: right;
    font-style: normal;
    color: #b0ad78;
}

.tk u {
    text-decoration: none;
    color: #2aa84a;
}

.tk-bar {
    display: flex;
    flex-direction: column;
    align-items: flex-end;
    width: 39px;
    flex: none;
    padding: 289px 2px 0 0;
    background: #ff0000;
    font: 12.5px/16px var(--num);
    letter-spacing: .4px;
    color: #f4a060;
    white-space: nowrap;
}

.tk-bar u {
    font-size: 13px;
}

.tk-vols {
    display: flex;
    flex-direction: column;
    align-items: flex-end;
    width: 41px;
    flex: none;
    font: 12.5px/16px var(--num);
    letter-spacing: .5px;
    color: #b0ad78;
}

.tk-vols span {
    height: 16px;
    width: 100%;
    text-align: right;
}

/* overlays */
.upload {
    position: absolute;
    left: 1724px;
    top: 122px;
    display: flex;
    width: 104px;
    height: 24px;
    border-radius: 4px;
    overflow: hidden;
    background: linear-gradient(90deg, #f4faff, #dcefff);
    color: #111;
    font-weight: bold;
    line-height: 24px;
}

.upload-icon {
    display: flex;
    align-items: center;
    justify-content: center;
    width: 30px;
    background: #2a86e6;
}

.upload span {
    margin-left: 11px;
}

.badge {
    position: absolute;
    left: 1788px;
    top: 835px;
    width: 64px;
    height: 64px;
}

.badge svg {
    display: block;
}

.badge-num {
    position: absolute;
    inset: 0;
    text-align: center;
    font: 300 24px/64px Roboto, sans-serif;
    color: #eef2f6;
}

.badge-num small {
    font-size: 10px;
}

.edge-gauge {
    position: absolute;
    left: 1910px;
    top: 621px;
    width: 8px;
    height: 64px;
    border-radius: 4px;
    background: linear-gradient(#2b2e36 35%, #7ee04a 45%, #d8ec4a 70%, #8ef0e0 100%);
}

.banner {
    position: absolute;
    left: 1114px;
    top: 908px;
    display: flex;
    align-items: center;
    width: 801px;
    height: 81px;
    padding-left: 18px;
    background: #7ba6d6;
}

.banner-name {
    width: 276px;
    font: 900 55.5px/81px var(--cjk);
    color: #14108a;
    white-space: nowrap;
}

.banner-logo {
    flex: none;
    margin-left: 28px;
}

.logo-url {
    font: 7px var(--num);
    fill: #fff;
}

.banner-url {
    margin-left: 29px;
    font: bold 50px/81px "DejaVu Serif", serif;
    letter-spacing: 1px;
    color: #fdfdfd;
    white-space: nowrap;
}
```
